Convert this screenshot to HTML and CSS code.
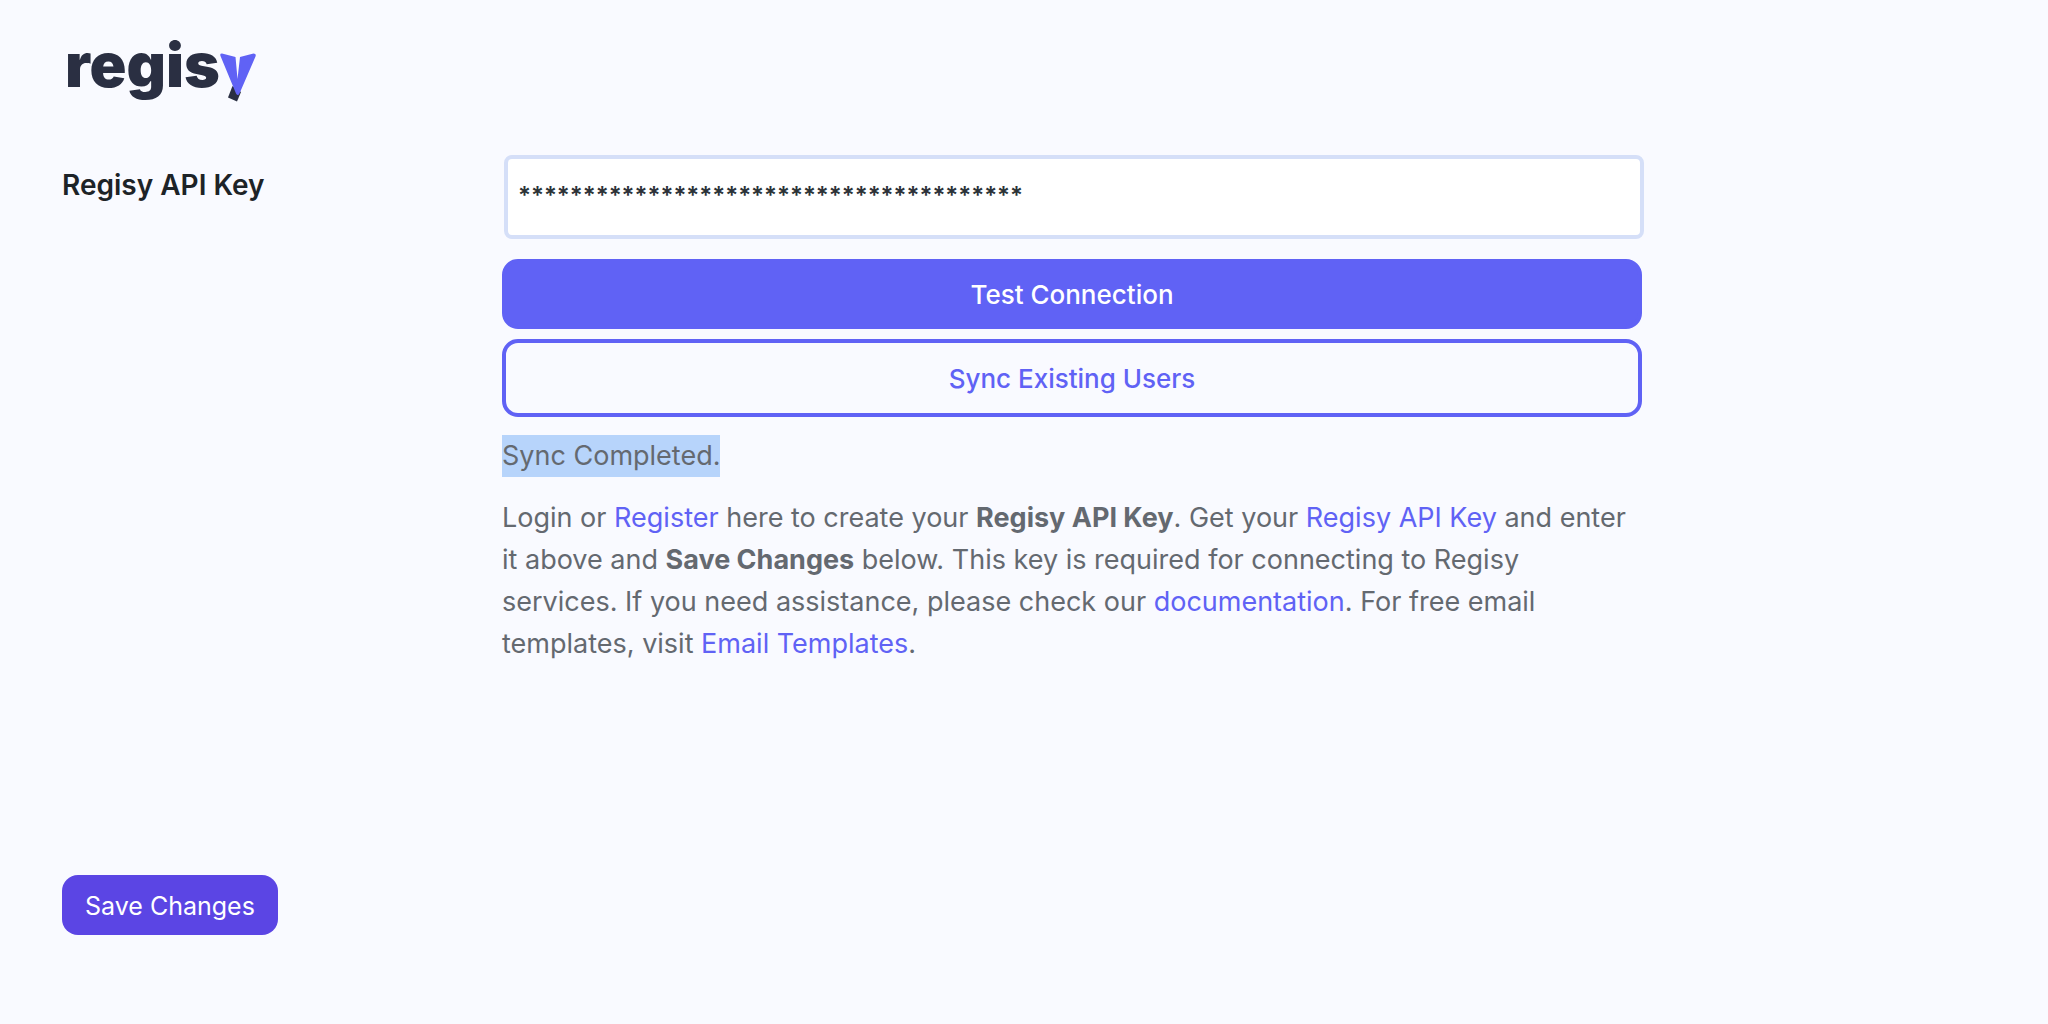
FILE: index.html
```html
<!DOCTYPE html>
<html lang="en">
<head>
<meta charset="utf-8">
<meta name="viewport" content="width=device-width, initial-scale=1">
<title>Regisy Settings</title>
<link rel="stylesheet" href="styles.css">
</head>
<body>
<main class="page">
  <header class="logo">
    <span class="logo-text">regis</span><svg class="logo-mark" viewBox="0 0 36 50" role="img" aria-label="y">
      <path fill="#2a2f42" d="M12.5 33 L8 44.500 L17 48.500 L21 39 Z"/>
      <path fill="#6062f5" d="M2 0.500 L15.500 4 L17.500 26 L20 4 L33.500 0.500 Q36.500 0.500 35.500 3.500 L19.500 40.500 Q18 43.500 16 40.500 L0.500 3 Q-0.500 0.500 2 0.500 Z"/>
    </svg>
  </header>
  <form class="settings">
    <div class="row">
      <label class="row-label" for="api-key">Regisy API Key</label>
      <div class="field">
        <input class="key-input" id="api-key" type="text" value="***************************************">
        <button class="button button-primary" type="button">Test Connection</button>
        <button class="button button-outline" type="button">Sync Existing Users</button>
        <p class="status"><mark class="selected">Sync Completed.</mark></p>
        <p class="description">Login or <a href="#register">Register</a> here to create your <strong>Regisy API Key</strong>. Get your <a href="#key">Regisy API Key</a> and enter it above and <strong>Save Changes</strong> below. This key is required for connecting to Regisy services. If you need assistance, please check our <a href="#docs">documentation</a>. For free email templates, visit <a href="#templates">Email Templates</a>.</p>
      </div>
    </div>
    <button class="save" type="submit">Save Changes</button>
  </form>
</main>
</body>
</html>
```
FILE: styles.css
```css
* {
  box-sizing: border-box;
}

body {
  margin: 0;
  background: #f9faff;
  color: #646970;
  font-family: Inter, "Liberation Sans", sans-serif;
  font-size: 27px;
  line-height: 42px;
}

.page {
  padding: 33px 62px 88px;
}

.logo {
  display: flex;
  align-items: flex-end;
  height: 70px;
  padding-left: 3px;
  color: #2a2f42;
}

.logo-text {
  padding-bottom: 4px;
  font-size: 61px;
  font-weight: 900;
  line-height: 68px;
}

.logo-mark {
  width: 36px;
  height: 50px;
}

.row {
  display: grid;
  grid-template-columns: 440px minmax(0, 1142px);
  padding-top: 52px;
}

.row-label {
  padding-top: 9px;
  color: #1d2327;
  font-size: 28px;
  font-weight: 600;
}

.field {
  display: flex;
  flex-direction: column;
  padding-right: 2px;
}

.key-input {
  height: 84px;
  margin: 0 -2px 20px 2px;
  padding: 0 10px 4px;
  border: 4px solid #d5dff8;
  border-radius: 8px;
  background: #fff;
  color: #2c3338;
  font: 600 24px Inter, "Liberation Sans", sans-serif;
}

.button {
  padding: 2px 20px 0;
  border: 4px solid #6062f5;
  border-radius: 16px;
  font: 500 26px/32px Inter, "Liberation Sans", sans-serif;
}

.button-primary {
  height: 70px;
  margin-bottom: 10px;
  background: #6062f5;
  color: #fff;
}

.button-outline {
  height: 78px;
  background: transparent;
  color: #6062f5;
}

.status {
  margin: 18px 0 20px;
}

.selected {
  display: inline-block;
  background: #b7d4fb;
  color: inherit;
}

.description {
  margin: 0;
  padding-right: 8px;
}

.description a {
  color: #6062f5;
  text-decoration: none;
}

.description strong {
  font-weight: 700;
}

.save {
  height: 60px;
  margin-top: 210px;
  padding: 2px 23px 0;
  border: 0;
  border-radius: 16px;
  background: #5b45e4;
  color: #fff;
  font: 400 25px/32px Inter, "Liberation Sans", sans-serif;
}
```
